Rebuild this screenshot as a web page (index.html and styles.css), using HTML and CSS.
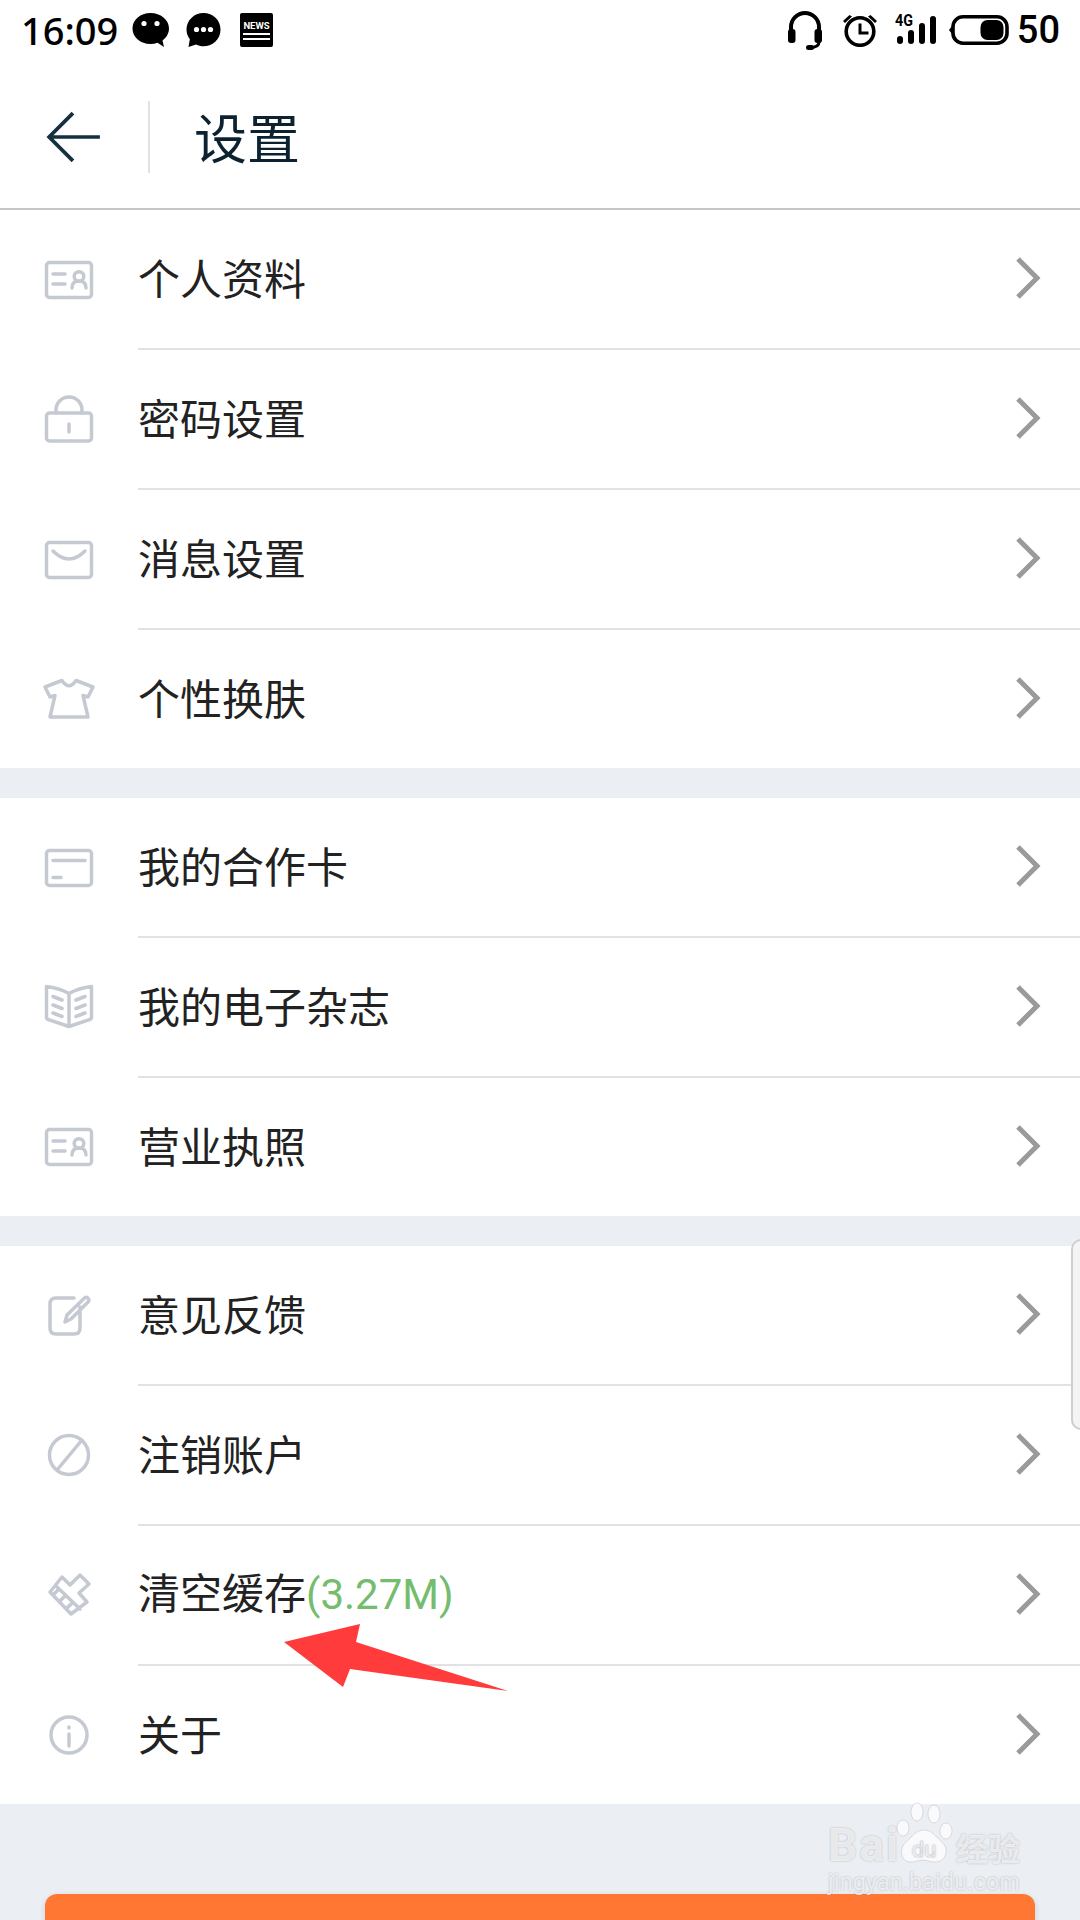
FILE: index.html
```html
<!DOCTYPE html>
<html lang="zh-CN">
<head>
<meta charset="utf-8">
<title>设置</title>
<link rel="stylesheet" href="styles.css">
</head>
<body>
<div class="page">
  <div class="statusbar">
    <span class="time">16:09</span>
    <svg class="st st-bubble" viewBox="0 0 37 36"><path d="M18.5 1C8.5 1 .5 7.700 .5 16.500S8.500 32 18.500 32c2.500 0 4.800-.4 7-1.200l6.500 4.200-1.500-6.500c4-3 6.500-7.200 6.500-12C37 7.700 28.500 1 18.500 1z"/><circle class="hole" cx="12" cy="11.500" r="2.600"/><circle class="hole" cx="25" cy="11.500" r="2.600"/></svg>
    <svg class="st st-bubble2" viewBox="0 0 35 36"><path d="M17.500 1C8 1 .5 8.500 .5 17.500c0 3.700 1.200 7 3.300 9.800L2.500 35l7.500-2.500c2.300 1.200 4.800 1.800 7.500 1.800 9.500 0 17-7.300 17-16.800S27 1 17.500 1z"/><circle class="hole" cx="10.500" cy="17.500" r="2.600"/><circle class="hole" cx="17.500" cy="17.500" r="2.600"/><circle class="hole" cx="24.500" cy="17.500" r="2.600"/></svg>
    <svg class="st st-news" viewBox="0 0 33 34"><rect width="33" height="34" rx="2"/><text class="news-t" x="16.500" y="16" text-anchor="middle">NEWS</text><rect class="hole" x="3" y="20" width="27" height="2"/><rect class="hole" x="3" y="25" width="27" height="2"/></svg>
    <span class="st-spacer"></span>
    <svg class="st st-head" viewBox="0 0 34 40"><path class="ln ln4" d="M3 22V17a14 14 0 0 1 28 0v5"/><rect x="0" y="19" width="7.500" height="14" rx="3"/><rect x="26.500" y="19" width="7.500" height="14" rx="3"/><path class="ln ln3" d="M31 32c0 4-3 5.500-9 5.500"/><rect x="18" y="35" width="8" height="5" rx="2.500"/></svg>
    <svg class="st st-alarm" viewBox="0 0 34 33"><circle class="ln ln35" cx="17" cy="17.500" r="13.800"/><path class="ln ln3" d="M17 9.500v9.500h8.500"/><path d="M0 7l6.500-6 2.500 1.500L2 9zM34 7l-6.500-6L25 2.500 32 9z"/></svg>
    <svg class="st st-signal" viewBox="0 0 42 42"><text class="sig-t" x="0" y="17" textLength="18" lengthAdjust="spacingAndGlyphs">4G</text><rect x="2" y="27" width="6" height="8" rx="3"/><rect x="13" y="21" width="6" height="14" rx="3"/><rect x="24" y="14" width="6" height="21" rx="3"/><rect x="35" y="7" width="6" height="28" rx="3"/></svg>
    <svg class="st st-batt" viewBox="0 0 60 30"><path d="M0 15l3-4v8z"/><rect class="ln ln35" x="4" y="1.800" width="54" height="26.400" rx="10"/><rect x="31.500" y="5" width="23" height="20" rx="7"/></svg>
    <span class="batt-num">50</span>
  </div>

  <header class="appbar">
    <svg class="back" viewBox="0 0 56 52"><path d="M53 26H4M27 3L4 26l23 23"/></svg>
    <span class="appbar-sep"></span>
    <h1 class="title">设置</h1>
  </header>

  <section class="group">
    <div class="row"><svg class="ico" viewBox="0 0 60 60"><rect x="7.500" y="12.500" width="45" height="35" rx="3"/><path d="M14 24h12M14 34h12M33 38c0-5 3-7 7-7s7 2 7 7"/><circle cx="40" cy="26.500" r="4.800"/></svg><div class="row-body"><span class="label">个人资料</span><svg class="chev" viewBox="0 0 26 44"><path d="M3 3l19 19L3 41"/></svg></div></div>
    <div class="row"><svg class="ico" viewBox="0 0 60 60"><rect x="7.500" y="23" width="45" height="28" rx="3"/><path d="M17 23v-3a13 13 0 0 1 26 0v3M30 34v8"/></svg><div class="row-body"><span class="label">密码设置</span><svg class="chev" viewBox="0 0 26 44"><path d="M3 3l19 19L3 41"/></svg></div></div>
    <div class="row"><svg class="ico" viewBox="0 0 60 60"><rect x="7.500" y="12.500" width="45" height="35" rx="3"/><path d="M14 21Q30 37 46 21"/></svg><div class="row-body"><span class="label">消息设置</span><svg class="chev" viewBox="0 0 26 44"><path d="M3 3l19 19L3 41"/></svg></div></div>
    <div class="row row-last"><svg class="ico" viewBox="0 0 60 60"><path d="M23 11.500Q30 22 37 11.500L54 18l-5 10-5-1.500L49 48H11l5-21.500L11 28 6 18z"/></svg><div class="row-body"><span class="label">个性换肤</span><svg class="chev" viewBox="0 0 26 44"><path d="M3 3l19 19L3 41"/></svg></div></div>
  </section>

  <div class="gap"></div>

  <section class="group">
    <div class="row"><svg class="ico" viewBox="0 0 60 60"><rect x="7.500" y="12.500" width="45" height="35" rx="3"/><path d="M14 22.500h32M14 39.500h8"/></svg><div class="row-body"><span class="label">我的合作卡</span><svg class="chev" viewBox="0 0 26 44"><path d="M3 3l19 19L3 41"/></svg></div></div>
    <div class="row"><svg class="ico" viewBox="0 0 60 60"><path d="M30 15.500Q20 10 7.500 8.500V39q0 2 2 2.600L30 48.500l20.500-6.900q2-.6 2-2.600V8.500Q40 10 30 15.500zV48.500M14 18.500l9 3.500M14 27l9 3.500M14 35l9 3.500M46 18.500l-9 3.500M46 27l-9 3.500M46 35l-9 3.500"/></svg><div class="row-body"><span class="label">我的电子杂志</span><svg class="chev" viewBox="0 0 26 44"><path d="M3 3l19 19L3 41"/></svg></div></div>
    <div class="row row-last"><svg class="ico" viewBox="0 0 60 60"><rect x="7.500" y="12.500" width="45" height="35" rx="3"/><path d="M14 24h12M14 34h12M33 38c0-5 3-7 7-7s7 2 7 7"/><circle cx="40" cy="26.500" r="4.800"/></svg><div class="row-body"><span class="label">营业执照</span><svg class="chev" viewBox="0 0 26 44"><path d="M3 3l19 19L3 41"/></svg></div></div>
  </section>

  <div class="gap"></div>

  <section class="group">
    <div class="row"><svg class="ico" viewBox="0 0 60 60"><path d="M35 12H17q-6 0-6 6v24q0 6 6 6h18q6 0 6-6V21M26 36l2-7L45 12.500q2-2 4-.2t-.2 4L32 33z"/></svg><div class="row-body"><span class="label">意见反馈</span><svg class="chev" viewBox="0 0 26 44"><path d="M3 3l19 19L3 41"/></svg></div></div>
    <div class="row"><svg class="ico" viewBox="0 0 60 60"><circle cx="30" cy="29" r="19.500"/><path d="M43 14L18 44"/></svg><div class="row-body"><span class="label">注销账户</span><svg class="chev" viewBox="0 0 26 44"><path d="M3 3l19 19L3 41"/></svg></div></div>
    <div class="row"><svg class="ico" viewBox="0 0 60 60"><path d="M11 26l12-15 8 8 10-10 9 9-10 9 8 9-16 12zM17 20l24 23M15 28l4-4M21 35l4-4M28 42l4-4"/></svg><div class="row-body"><span class="label">清空缓存<span class="size">(3.27M)</span></span><svg class="chev" viewBox="0 0 26 44"><path d="M3 3l19 19L3 41"/></svg></div></div>
    <div class="row row-last"><svg class="ico" viewBox="0 0 60 60"><circle cx="30" cy="30" r="18"/><path d="M30 29v12M30 22v1"/></svg><div class="row-body"><span class="label">关于</span><svg class="chev" viewBox="0 0 26 44"><path d="M3 3l19 19L3 41"/></svg></div></div>
  </section>

  <div class="footer"><div class="btn"></div></div>

  <div class="scroll-handle"></div>

  <svg class="arrow" viewBox="0 0 230 76"><polygon points="0,18 76,0 72,18 224,67 66,45 59,63"/></svg>

  <div class="wm">
    <div class="wm-top">
      <span class="wm-b">Bai</span>
      <svg class="wm-paw" viewBox="0 0 60 66"><ellipse cx="7" cy="26" rx="6" ry="8"/><ellipse cx="21" cy="10" rx="6" ry="9"/><ellipse cx="38" cy="12" rx="6" ry="9"/><ellipse cx="50" cy="29" rx="6" ry="8"/><path d="M28 28c8 0 12 7 18 12 7 6 5 20-7 20-6 0-8-2-12-2s-7 2-12 2C4 60 3 46 10 40c6-5 10-12 18-12z"/><text class="wm-du" x="28" y="55" text-anchor="middle">du</text></svg>
      <span class="wm-cn">经验</span>
    </div>
    <div class="wm-url">jingyan.baidu.com</div>
  </div>
</div>
</body>
</html>
```

FILE: styles.css
```css
* { box-sizing: border-box; }
html, body { margin: 0; padding: 0; }
body { width: 1080px; height: 1920px; overflow: hidden; background: #fff; font-family: "Noto Sans CJK SC", "Noto Sans", sans-serif; }
.page { position: relative; width: 1080px; height: 1920px; overflow: hidden; display: flex; flex-direction: column; }

.statusbar { height: 60px; flex: none; display: flex; align-items: center; padding: 0 20px 0 21px; color: #000; }
.time { font: 500 38px/1 "Noto Sans", sans-serif; width: 111px; }
.st { display: block; flex: none; fill: #000; }
.st .hole { fill: #fff; }
.st-bubble { width: 37px; height: 36px; }
.st-bubble2 { width: 35px; height: 36px; margin-left: 17px; }
.st-news { width: 33px; height: 34px; margin-left: 19px; }
.news-t { font: 700 9.500px "Roboto", sans-serif; fill: #fff; }
.st-spacer { flex: 1; }
.st-head { width: 34px; height: 40px; }
.ln { fill: none; stroke: #000; }
.ln3 { stroke-width: 3px; }
.ln35 { stroke-width: 3.600px; }
.ln4 { stroke-width: 4px; }
.st-alarm { width: 34px; height: 33px; margin-left: 21px; }
.st-signal { width: 42px; height: 42px; margin-left: 18px; }
.sig-t { font: 700 16px "Roboto", sans-serif; }
.st-batt { width: 60px; height: 30px; margin-left: 12px; }
.batt-num { font: 500 38px/1 "Roboto", sans-serif; margin-left: 8px; }

.appbar { height: 150px; flex: none; display: flex; align-items: center; padding-top: 6px; border-bottom: 2px solid #c6c6c6; }
.back { width: 58px; height: 54px; margin-left: 45px; fill: none; stroke: #17303f; stroke-width: 3.600px; }
.appbar-sep { width: 2px; height: 72px; margin-left: 45px; background: #e2e2e2; }
.title { margin: 0 0 3px 44px; font-size: 53px; line-height: 72px; font-weight: 400; color: #0c2230; }

.group { flex: none; background: #fff; }
.row { height: 140px; display: flex; align-items: center; padding-left: 39px; }
.row-last { height: 138px; }
.ico { width: 60px; height: 60px; flex: none; fill: none; stroke: #c5c9d2; stroke-width: 3.500px; stroke-linecap: round; stroke-linejoin: round; }
.row-body { flex: 1; height: 100%; margin-left: 39px; display: flex; align-items: center; justify-content: space-between; padding-right: 39px; border-bottom: 2px solid #e2e2e2; }
.row-last .row-body { border-bottom: 0; }
.label { font-size: 42px; line-height: 60px; margin-bottom: 5px; color: #222; }
.size { font-family: "Roboto", sans-serif; color: #74bc6e; }
.chev { width: 26px; height: 44px; flex: none; fill: none; stroke: #9a9a9a; stroke-width: 5px; margin-bottom: 2px; }

.gap { height: 30px; flex: none; background: #ebeef3; }
.footer { flex: 1; min-height: 0; background: #ebeef3; padding: 90px 45px 0; }
.btn { height: 100px; background: #ff7733; border-radius: 12px; box-shadow: 0 2px 6px rgba(0,0,0,.12); }

.scroll-handle { position: absolute; left: 1071px; top: 1239px; width: 20px; height: 191px; background: #f4f4f4; border: 2px solid #cfcfcf; border-radius: 10px; }
.arrow { position: absolute; left: 284px; top: 1624px; width: 230px; height: 76px; fill: #ff3b3b; }

.wm { position: absolute; left: 828px; top: 1804px; width: 196px; color: rgba(255,255,255,.72); text-shadow: 0 0 2px rgba(120,125,135,.55); }
.wm-top { display: flex; align-items: flex-end; height: 64px; }
.wm-b { font: 700 46px/46px "Roboto", sans-serif; letter-spacing: 2px; width: 68px; }
.wm-paw { width: 60px; height: 66px; flex: none; fill: rgba(255,255,255,.72); stroke: rgba(150,155,165,.3); stroke-width: 1px; }
.wm-du { font: 400 22px "Roboto", sans-serif; fill: #f3f5f8; stroke: rgba(150,155,165,.25); stroke-width: .4px; }
.wm-cn { font-size: 32px; line-height: 42px; font-weight: 700; }
.wm-url { font: 400 23px/30px "Roboto", sans-serif; letter-spacing: .3px; white-space: nowrap; }
```
